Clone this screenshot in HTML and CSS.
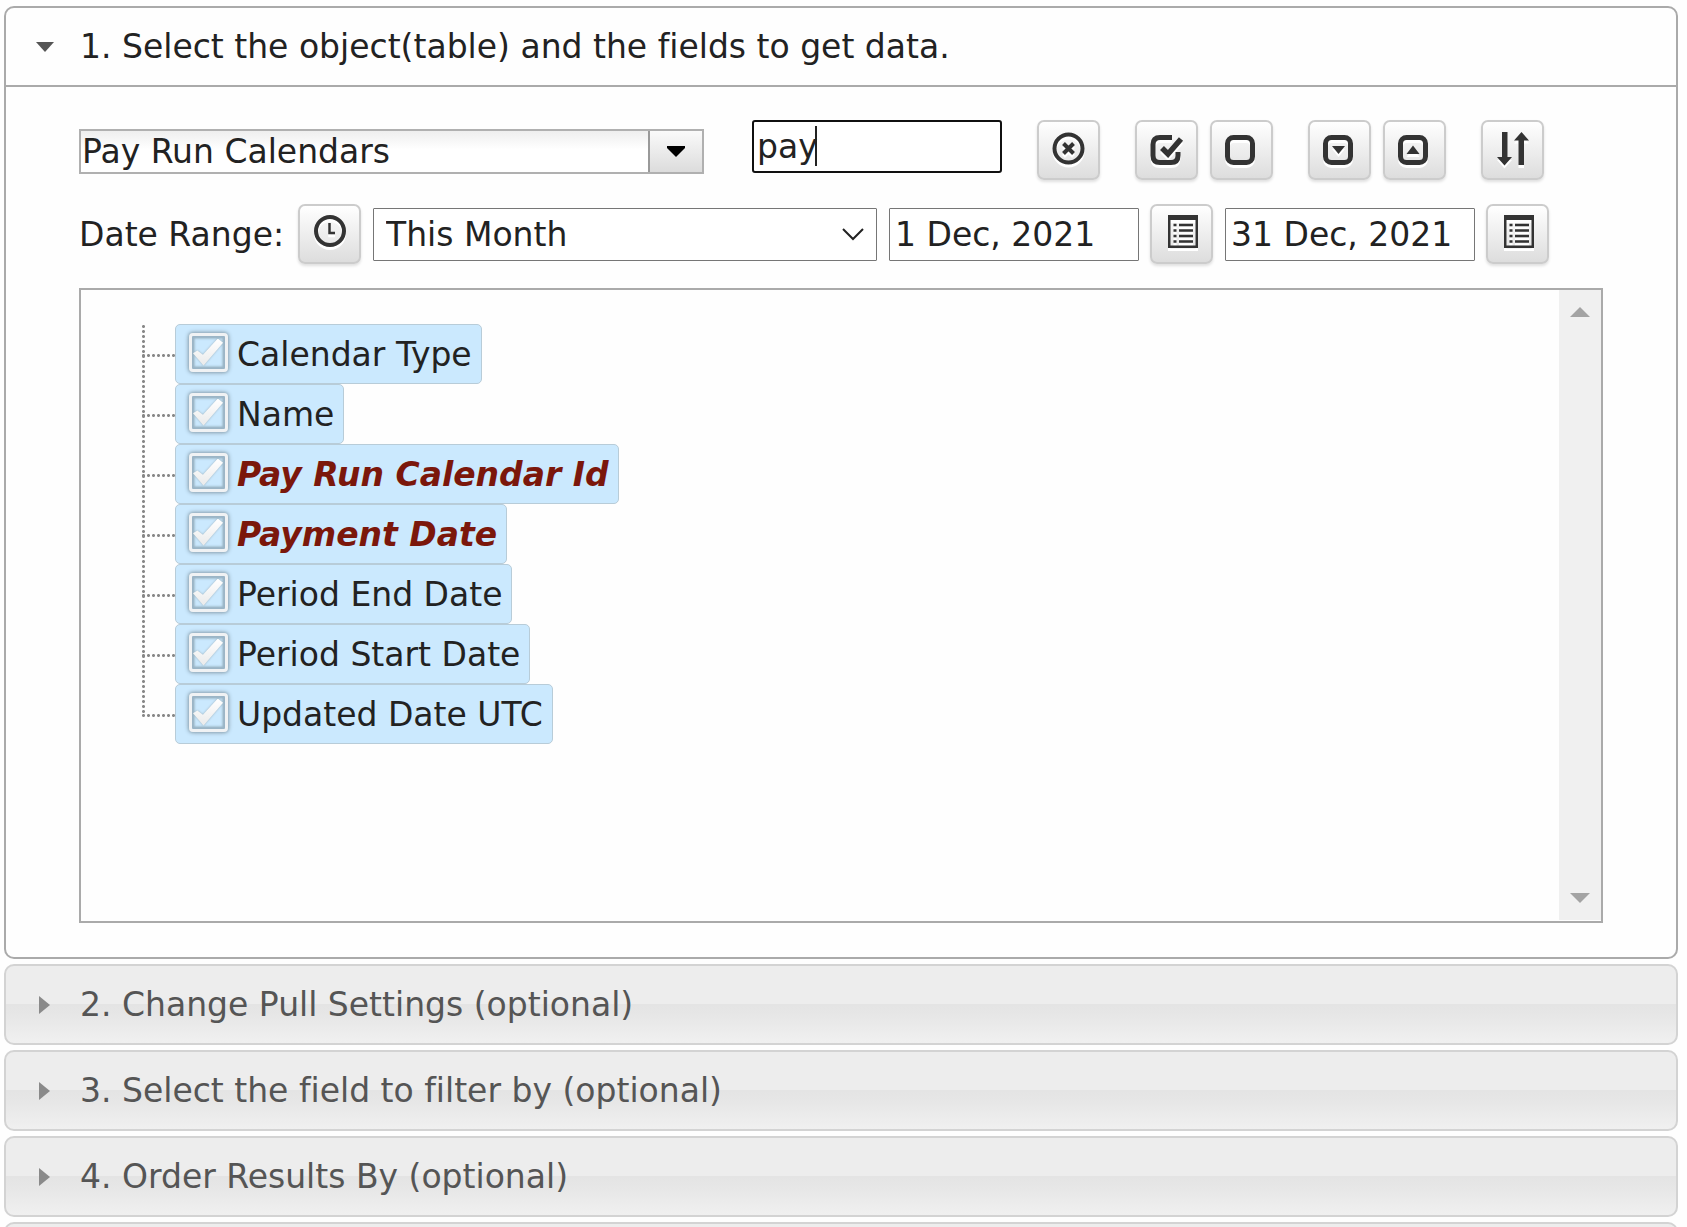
FILE: index.html
```html
<!DOCTYPE html>
<html lang="en">
<head>
    <meta charset="UTF-8">
    <meta name="viewport" content="width=device-width, initial-scale=1.0">
    <title>Select Data</title>
    <link rel="stylesheet" href="styles.css">
</head>
<body>

<div class="accordion">
    <h3 class="header active">
        <button type="button" class="header-btn" aria-expanded="true">
            <span class="marker"><svg width="18" height="10" viewBox="0 0 18 10"><path d="M0 0h18L9 10z" fill="#555"/></svg></span>
            1. Select the object(table) and the fields to get data.
        </button>
    </h3>
    <div class="content">
        <div class="toolbar">
            <div class="combo">
                <input type="text" class="combo-input" value="Pay Run Calendars" aria-label="Object">
                <button type="button" class="combo-btn" aria-label="Show objects">
                    <svg width="18" height="11" viewBox="0 0 18 11"><path d="M0 0h18v2l-9 9-9-9z" fill="#000"/></svg>
                </button>
            </div>
            <div class="search">
                <input type="text" class="search-input" value="pay" aria-label="Search fields">
                <span class="caret"></span>
            </div>
            <div class="groups">
                <div class="group">
                    <button type="button" class="tool" aria-label="Clear search">
                        <svg viewBox="2 2 59 56"><g fill="none" stroke="#333" stroke-width="4"><circle cx="31.500" cy="28.500" r="14"/><path d="M26.500 23.500l10 10M36.500 23.500l-10 10"/></g></svg>
                    </button>
                </div>
                <div class="group">
                    <button type="button" class="tool" aria-label="Check all">
                        <svg viewBox="2 2 59 56"><g fill="none" stroke="#333" stroke-width="5"><path d="M37 17.500H25q-7 0-7 7v11q0 7 7 7h11q7 0 7-7V32"/><path d="M27 28l6 6L46 19" stroke-width="5.500"/></g></svg>
                    </button>
                    <button type="button" class="tool" aria-label="Uncheck all">
                        <svg viewBox="2 2 59 56"><rect x="17.500" y="17.500" width="25" height="25" rx="6" fill="none" stroke="#333" stroke-width="5"/></svg>
                    </button>
                </div>
                <div class="group">
                    <button type="button" class="tool" aria-label="Expand all">
                        <svg viewBox="2 2 59 56"><rect x="17.500" y="17.500" width="25" height="25" rx="6" fill="none" stroke="#333" stroke-width="5"/><path d="M24 26h13l-6.500 8z" fill="#333"/></svg>
                    </button>
                    <button type="button" class="tool" aria-label="Collapse all">
                        <svg viewBox="2 2 59 56"><rect x="17.500" y="17.500" width="25" height="25" rx="6" fill="none" stroke="#333" stroke-width="5"/><path d="M23.500 34h13L30 25.500z" fill="#333"/></svg>
                    </button>
                </div>
                <div class="group">
                    <button type="button" class="tool" aria-label="Sort">
                        <svg viewBox="2 2 59 56"><path d="M21 12h5.500v25H31l-7.500 8.500L16 37h5zM37.500 45V20.500H33l7.500-8.500 7.500 8.500h-5V45z" fill="#333"/></svg>
                    </button>
                </div>
            </div>
        </div>

        <div class="dates">
            <label for="range" class="range-label">Date Range:</label>
            <button type="button" class="tool" aria-label="Refresh range">
                <svg viewBox="2 2 59 56"><g fill="none" stroke="#333"><circle cx="32" cy="27" r="14" stroke-width="4"/><path d="M31.500 19v10H37" stroke-width="2.500"/></g></svg>
            </button>
            <div class="select-wrap">
                <select id="range" class="range">
                    <option>This Month</option>
                    <option>Last Month</option>
                </select>
                <svg class="chevron" width="22" height="13" viewBox="0 0 22 13"><path d="M1 1l10 10L21 1" fill="none" stroke="#222" stroke-width="2"/></svg>
            </div>
            <div class="date">
                <input type="text" class="date-input" value="1 Dec, 2021" aria-label="From date">
                <button type="button" class="tool" aria-label="Pick from date">
                    <svg viewBox="2 2 59 56"><path d="M18 11h30v33H18zM20.500 16v25.500h25V16z" fill="#333" fill-rule="evenodd"/><path d="M23.500 21h3M23.500 26.500h3M23.500 32h3M23.500 37.500h3M29 21h14M29 26.500h14M29 32h14M29 37.500h14" stroke="#333" stroke-width="2.500"/></svg>
                </button>
            </div>
            <div class="date">
                <input type="text" class="date-input" value="31 Dec, 2021" aria-label="To date">
                <button type="button" class="tool" aria-label="Pick to date">
                    <svg viewBox="2 2 59 56"><path d="M18 11h30v33H18zM20.500 16v25.500h25V16z" fill="#333" fill-rule="evenodd"/><path d="M23.500 21h3M23.500 26.500h3M23.500 32h3M23.500 37.500h3M29 21h14M29 26.500h14M29 32h14M29 37.500h14" stroke="#333" stroke-width="2.500"/></svg>
                </button>
            </div>
        </div>

        <div class="fields">
            <ul class="tree">
                <li><label class="node"><input type="checkbox" checked>Calendar Type</label></li>
                <li><label class="node"><input type="checkbox" checked>Name</label></li>
                <li><label class="node match"><input type="checkbox" checked>Pay Run Calendar Id</label></li>
                <li><label class="node match"><input type="checkbox" checked>Payment Date</label></li>
                <li><label class="node"><input type="checkbox" checked>Period End Date</label></li>
                <li><label class="node"><input type="checkbox" checked>Period Start Date</label></li>
                <li><label class="node"><input type="checkbox" checked>Updated Date UTC</label></li>
            </ul>
            <div class="scrollbar">
                <svg width="20" height="10" viewBox="0 0 20 10"><path d="M0 10h20L10 0z" fill="#a3a3a3"/></svg>
                <svg width="20" height="10" viewBox="0 0 20 10"><path d="M0 0h20L10 10z" fill="#a3a3a3"/></svg>
            </div>
        </div>
    </div>

    <h3 class="header">
        <button type="button" class="header-btn" aria-expanded="false">
            <span class="marker"><svg width="11" height="18" viewBox="0 0 11 18"><path d="M0 0v18l11-9z" fill="#8a8a8a"/></svg></span>
            2. Change Pull Settings (optional)
        </button>
    </h3>
    <h3 class="header">
        <button type="button" class="header-btn" aria-expanded="false">
            <span class="marker"><svg width="11" height="18" viewBox="0 0 11 18"><path d="M0 0v18l11-9z" fill="#8a8a8a"/></svg></span>
            3. Select the field to filter by (optional)
        </button>
    </h3>
    <h3 class="header">
        <button type="button" class="header-btn" aria-expanded="false">
            <span class="marker"><svg width="11" height="18" viewBox="0 0 11 18"><path d="M0 0v18l11-9z" fill="#8a8a8a"/></svg></span>
            4. Order Results By (optional)
        </button>
    </h3>
    <h3 class="header">
        <button type="button" class="header-btn" aria-expanded="false"></button>
    </h3>
</div>

</body>
</html>
```
FILE: styles.css
```css
* {
    box-sizing: border-box;
}
html {
    overflow: hidden;
}
body {
    margin: 0;
    height: 100vh;
    overflow: hidden;
    background: #fefefe;
    color: #222;
    font-family: Verdana, "DejaVu Sans", sans-serif;
    font-size: 33px;
    font-variant-ligatures: none;
}
input, select, button {
    font: inherit;
    color: inherit;
    margin: 0;
}
.accordion {
    padding: 6px 9px 0 4px;
}

/* accordion headers */
.header {
    margin: 0 0 5px;
    height: 81px;
    border: 2px solid #d3d3d3;
    border-radius: 10px;
    background: linear-gradient(#ededed 49%, #e4e4e4 50%, #e6e6e6 62%, #f0f0f0);
    color: #555;
    font-size: 33px;
    font-weight: normal;
}
.header.active {
    margin-bottom: 0;
    border-color: #aaa;
    border-radius: 10px 10px 0 0;
    background: #fefefe;
    color: #222;
}
.header-btn {
    display: flex;
    align-items: center;
    width: 100%;
    height: 100%;
    padding: 0;
    border: none;
    background: none;
    font-variant-ligatures: none;
    text-align: left;
    white-space: nowrap;
}
.marker {
    display: flex;
    justify-content: center;
    width: 74px;
    padding-left: 3px;
}
.content {
    margin-bottom: 5px;
    padding: 33px 73px 34px;
    border: 2px solid #aaa;
    border-top: none;
    border-radius: 0 0 10px 10px;
}

/* first row */
.toolbar {
    display: flex;
    align-items: flex-start;
    margin-bottom: 24px;
}
.combo {
    display: flex;
    flex: 0 1 625px;
    height: 45px;
    margin: 9px 48px 0 0;
    border: 2px solid #b0b0b0;
}
.combo-input {
    flex: 1;
    min-width: 0;
    padding: 0 0 0 1px;
    border: none;
    background: linear-gradient(#eee, #fff 45%);
}
.combo-btn {
    display: flex;
    align-items: center;
    justify-content: center;
    width: 54px;
    padding: 0;
    border: none;
    border-left: 2px solid #999;
    background: linear-gradient(#fafafa, #dcdcdc);
}
.search {
    position: relative;
    flex: 0 1 250px;
    margin-right: 35px;
}
.search-input {
    width: 100%;
    height: 53px;
    padding: 0 3px;
    border: 2px solid #101010;
    border-radius: 3px;
    background: #fff;
    outline: none;
}
.caret {
    position: absolute;
    top: 6px;
    left: 63px;
    width: 2px;
    height: 40px;
    background: #222;
}
.groups {
    display: flex;
    gap: 35px;
}
.group {
    display: flex;
    gap: 12px;
}
.tool {
    flex: none;
    width: 63px;
    height: 60px;
    padding: 0;
    border: 2px solid #ccc;
    border-radius: 7px;
    background: linear-gradient(#fff, #ddd);
    box-shadow: 0 2px 3px rgba(0, 0, 0, 0.12);
}
.tool svg {
    display: block;
    width: 100%;
    height: 100%;
    filter: drop-shadow(0 3px 0 #fff);
}

/* date range row */
.dates {
    display: flex;
    align-items: center;
    gap: 12px;
    margin-bottom: 24px;
}
.range-label {
    width: 207px;
    white-space: nowrap;
}
.select-wrap {
    position: relative;
    flex: 0 1 504px;
}
.range {
    appearance: none;
    display: block;
    width: 100%;
    height: 53px;
    padding: 0 12px;
    border: 1px solid #767676;
    border-radius: 1px;
    background: #fff;
}
.chevron {
    position: absolute;
    top: 20px;
    right: 13px;
    pointer-events: none;
}
.date {
    display: flex;
    align-items: center;
    gap: 11px;
}
.date-input {
    width: 250px;
    height: 53px;
    padding: 0 5px;
    border: 1px solid #767676;
    border-radius: 1px;
    background: #fff;
}

/* field tree */
.fields {
    display: flex;
    justify-content: space-between;
    height: 635px;
    border: 2px solid #aaa;
}
.tree {
    margin: 0;
    padding: 34px 0 0 60px;
    list-style: none;
}
.tree li {
    position: relative;
    display: flex;
    height: 60px;
    padding-left: 34px;
}
.tree li::before {
    content: "";
    position: absolute;
    top: 0;
    left: 0;
    width: 5px;
    height: 60px;
    background: radial-gradient(circle, #888 1px, transparent 2px) 0 0 / 5px 5px;
}
.tree li:last-child::before {
    height: 30px;
}
.tree li::after {
    content: "";
    position: absolute;
    top: 29px;
    left: 0;
    width: 34px;
    height: 5px;
    background: radial-gradient(circle, #888 1px, transparent 2px) 0 0 / 5px 5px;
}
.node {
    display: flex;
    align-items: center;
    padding: 0 9px 0 13px;
    border: 1px solid #b8ccd8;
    border-radius: 5px;
    background: #cbe9fe;
    white-space: nowrap;
}
.node.match {
    color: #7b170b;
    font-weight: bold;
    font-style: italic;
}
.node input {
    appearance: none;
    width: 39px;
    height: 39px;
    margin: 0 9px 4px 0;
    border: 3px solid #f0f2f4;
    border-radius: 4px;
    box-shadow: 0 0 4px #8ba3b3, inset 0 0 2px 2px #9ab5c7;
}
.node input::before {
    content: "";
    display: block;
    width: 31px;
    height: 27px;
    margin: 3px 1px;
    background: linear-gradient(#fff, #eaeaea);
    clip-path: polygon(0 55%, 14% 44%, 32% 60%, 80% 0, 97% 16%, 34% 100%);
}
.node input:checked {
    filter: drop-shadow(0 0 1px #9ab0be);
}
.scrollbar {
    display: flex;
    flex-direction: column;
    align-items: center;
    justify-content: space-between;
    width: 42px;
    margin-bottom: 1px;
    padding: 17px 0;
    background: #f0f0f0;
}
```
